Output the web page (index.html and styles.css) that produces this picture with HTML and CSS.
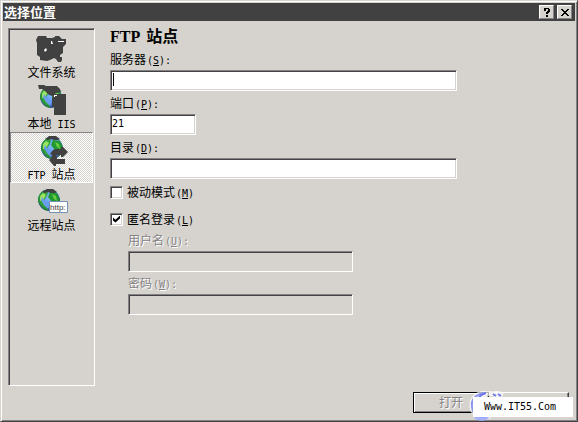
FILE: index.html
```html
<!DOCTYPE html>
<html lang="zh-CN">
<head>
<meta charset="utf-8">
<title>选择位置</title>
<link rel="stylesheet" href="styles.css">
</head>
<body>
<svg width="0" height="0" class="defs" aria-hidden="true">
  <defs>
    <radialGradient id="sea" cx="55%" cy="40%" r="60%">
      <stop offset="0" stop-color="#8cc3ff"/>
      <stop offset=".6" stop-color="#5a92ee"/>
      <stop offset="1" stop-color="#315aa5"/>
    </radialGradient>
    <radialGradient id="rim" cx="50%" cy="45%" r="55%">
      <stop offset=".7" stop-color="#103050" stop-opacity="0"/>
      <stop offset="1" stop-color="#103050" stop-opacity=".45"/>
    </radialGradient>
    <clipPath id="disc"><circle cx="11" cy="11" r="11"/></clipPath>
    <g id="globe" clip-path="url(#disc)">
      <circle cx="11" cy="11" r="11" fill="url(#sea)"/>
      <path d="M0 6 5 1l5 2-1 4-3 4 1 3 3 3v5l-4-1-6-8z" fill="#31a639"/>
      <path d="M2 7l3-3 3 2-3 5-3 1z" fill="#9ce363"/>
      <path d="M12 3l7 1 3 6-1 7-3 3-2-5-3-3-3-4z" fill="#219a31"/>
      <path d="M14 5l4 2 1 5-3-2z" fill="#6bcb42"/>
      <path d="M4 8l3 5 4 4-1 3-4-4-3-5z" fill="#6b9ef0"/>
      <circle cx="11" cy="11" r="11" fill="url(#rim)"/>
    </g>
  </defs>
</svg>
<div class="window">
  <header class="titlebar">
    <span class="title">选择位置</span>
    <button class="tool" type="button" aria-label="帮助"><svg width="8" height="9" viewBox="0 0 8 9" shape-rendering="crispEdges"><path d="M1 0h5v1h1v3H6v1H5v1H3V4h1V3h1V1H3v2H1zM3 7h2v2H3z"/></svg></button>
    <button class="tool" type="button" aria-label="关闭"><svg width="8" height="7" viewBox="0 0 8 7" shape-rendering="crispEdges"><path d="M0 0h2v1h1v1h2V1h1V0h2v1H7v1H6v1H5v1h1v1h1v1h1v1H6V6H5V5H3v1H2v1H0V6h1V5h1V4h1V3H2V2H1V1H0z"/></svg></button>
  </header>
  <div class="content">
    <nav class="places">
      <button class="place" type="button">
        <svg width="32" height="32" viewBox="0 0 32 32"><path d="M2 2h8l1 2h5l3-1V2h4l3 3h4v5l-3 3v6l-3 2v2h2v3l-1 2h-3l-2-3-2-1-4 2-3 1-7-1v-3l-3-2V9l-1-3z" fill="#424142"/><path d="M15 7h1l1 3h-2zM22 7h6v1h-6zM8 16l2-2 1 2-2 2z" fill="#fff"/></svg>
        <span>文件系统</span>
      </button>
      <button class="place" type="button">
        <svg width="32" height="32" viewBox="0 0 32 32"><use href="#globe" x="4" y="1"/><path d="M2 0h6l2 1h11l3 3 1 3-5 1-3 3-4-1-4-4-3-2H3zM18 9h12v21H18v-8h-2V13z" fill="#424142"/><path d="M18 10h3v1h-2v1h-1z" fill="#fff"/></svg>
        <span>本地<span class="latin"> IIS</span></span>
      </button>
      <button class="place selected" type="button" aria-pressed="true">
        <svg width="32" height="32" viewBox="0 0 32 32"><use href="#globe" x="5" y="1"/><path d="M9 3l4-3h7l4 3-2 1h-4l-3-1-3 1zM17 14l3-1h5v-2h2l5 5-5 5h-2v-2h-5l1 2v2h8v5h-9v2h-2l-5-6 3-3v-2l-2-1z" fill="#424142"/></svg>
        <span><span class="latin">FTP </span>站点</span>
      </button>
      <button class="place" type="button">
        <svg width="32" height="32" viewBox="0 0 32 32"><use href="#globe" x="2" y="2"/><path d="M6 5l5-3h6l4 3-2 1h-4l-3-1-3 1z" fill="#424142"/><path d="M13.500 14.500h18v11h-18z" fill="#fff" stroke="#7390b5"/><text class="http" x="14" y="23">http:</text></svg>
        <span>远程站点</span>
      </button>
    </nav>
    <main class="form">
      <h1><span>FTP</span> <span>站点</span></h1>
      <div class="field">
        <label for="server">服务器<span class="latin">(<u>S</u>):</span></label>
        <div class="entry"><input class="box" id="server" type="text" autofocus><i class="caret"></i></div>
      </div>
      <div class="field">
        <label for="port">端口<span class="latin">(<u>P</u>):</span></label>
        <input class="box short" id="port" type="text" value="21">
      </div>
      <div class="field">
        <label for="folder">目录<span class="latin">(<u>D</u>):</span></label>
        <input class="box" id="folder" type="text">
      </div>
      <div class="check"><input id="passive" type="checkbox"><label for="passive">被动模式<span class="latin">(<u>M</u>)</span></label></div>
      <div class="check"><input id="anon" type="checkbox" checked><label for="anon">匿名登录<span class="latin">(<u>L</u>)</span></label></div>
      <div class="login">
        <div class="field">
          <label for="user">用户名<span class="latin">(<u>U</u>):</span></label>
          <input class="box" id="user" type="text" disabled>
        </div>
        <div class="field">
          <label for="pass">密码<span class="latin">(<u>W</u>):</span></label>
          <input class="box" id="pass" type="password" disabled>
        </div>
      </div>
    </main>
  </div>
  <footer class="actions">
    <button class="action default" type="button" disabled>打开</button>
    <button class="action" type="button" aria-label="取消"></button>
  </footer>
  <svg class="swirl" width="38" height="30" viewBox="0 0 38 30" fill="none"><path d="M18 2C7 2 2 8 3 16c1 7 7 12 18 9M34 4l-9-3M12 7c5-6 12-5 18-2" stroke="#fff" stroke-width="5" opacity=".7"/><path d="M16 2C6 3 2 9 3 16c1 9 9 13 17 9" stroke="#8c96ef" stroke-width="2"/><path d="M9 9c1-4 4-6 8-7M24 3l3 2M29 3l3 2" stroke="#6b79e7" stroke-width="2"/><path d="M6 26c4 3 10 3 13 0" stroke="#a5b2ff" stroke-width="3"/></svg>
  <div class="stamp">Www.IT55.Com</div>
</div>
</body>
</html>
```
FILE: styles.css
```css
:root {
  --face: #d6d3ce;
  --dark: #424142;
  --shade: #848284;
}

* {
  box-sizing: border-box;
}

body {
  margin: 0;
  font: 12px/14px "Noto Sans CJK SC", sans-serif;
  color: #000;
}

button,
input {
  font: inherit;
  color: inherit;
  margin: 0;
  padding: 0;
  border-radius: 0;
  outline: 0;
}

.defs {
  position: absolute;
}

.latin,
.stamp,
#port {
  font-family: "DejaVu Sans Mono", monospace;
  font-size: 10px;
}

.latin {
  line-height: 1;
  white-space: pre;
}

.window {
  position: relative;
  display: flex;
  flex-direction: column;
  min-height: 100vh;
  padding: 1px;
  background: var(--face);
  border: 1px solid;
  border-color: var(--face) var(--dark) var(--dark) var(--face);
  box-shadow: inset 1px 1px #fff, inset -1px -1px var(--shade);
}

.titlebar {
  display: flex;
  align-items: center;
  gap: 3px;
  height: 18px;
  margin: 1px;
  padding: 0 3px 0 1px;
  background: var(--dark);
  color: #fff;
  font-weight: bold;
}

.title {
  flex: 1;
  font-size: 13px;
  line-height: 14px;
}

.tool {
  display: grid;
  place-items: center;
  width: 15px;
  height: 14px;
  background: var(--face);
  border: 1px solid;
  border-color: #fff var(--shade) var(--shade) #fff;
}

.content {
  flex: 1;
  display: flex;
  gap: 15px;
  padding: 6px;
}

.places {
  width: 87px;
  border: 1px solid;
  border-color: var(--shade) #fff #fff var(--shade);
  box-shadow: inset 1px 1px var(--dark);
  padding: 1px;
}

.place {
  display: flex;
  flex-direction: column;
  align-items: center;
  justify-content: flex-start;
  width: 100%;
  height: 51px;
  padding-top: 3px;
  background: none;
  border: 1px solid transparent;
}

.place > svg {
  flex: none;
}

.place > span {
  height: 12px;
  line-height: 12px;
}

.selected {
  border-color: var(--shade) #fff #fff var(--shade);
  background: repeating-conic-gradient(#fff 0 25%, var(--face) 0 50%) 0 0 / 2px 2px;
}

.http {
  font: 8px "Liberation Sans", sans-serif;
  fill: #424142;
}

.form {
  flex: 1;
}

h1 {
  display: flex;
  gap: 6px;
  margin: 0 0 6px;
  font: bold 16px/18px "Liberation Serif", "Noto Sans CJK SC", serif;
}

.field {
  display: flex;
  flex-direction: column;
  gap: 4px;
  margin-bottom: 5px;
}

label {
  height: 14px;
}

.field .latin,
.check .latin {
  margin-left: 1px;
}

.entry {
  position: relative;
  display: flex;
  max-width: 347px;
}

.caret {
  position: absolute;
  left: 3px;
  top: 3px;
  width: 1px;
  height: 13px;
  background: #000;
}

.box {
  width: 100%;
  max-width: 347px;
  height: 21px;
  padding: 0 1px 2px;
  background: #fff;
  border: 1px solid;
  border-color: var(--shade) #fff #fff var(--shade);
  box-shadow: inset 1px 1px var(--dark), inset -1px -1px var(--face);
  caret-color: transparent;
}

.short {
  max-width: 86px;
}

.check {
  display: flex;
  align-items: center;
  gap: 4px;
  height: 16px;
  margin-bottom: 11px;
}

.check input {
  appearance: none;
  width: 13px;
  height: 13px;
  background: #fff;
  border: 1px solid;
  border-color: var(--shade) #fff #fff var(--shade);
  box-shadow: inset 1px 1px var(--dark), inset -1px -1px var(--face);
}

.check input:checked::before {
  content: "";
  display: block;
  width: 7px;
  height: 7px;
  margin: 2px;
  background: #000;
  clip-path: polygon(0 28%, 35% 60%, 100% 0, 100% 42%, 35% 100%, 0 70%);
}

.login {
  margin: -5px 0 0 18px;
  color: var(--shade);
  text-shadow: 1px 1px #fff;
}

.login .field {
  margin-bottom: 4px;
}

.login .box {
  max-width: 225px;
  background: var(--face);
}

.actions {
  display: flex;
  justify-content: flex-end;
  gap: 5px;
  padding: 0 7px 7px;
}

.action {
  width: 75px;
  height: 21px;
  padding-bottom: 2px;
  background: var(--face);
  border: 1px solid;
  border-color: #fff var(--dark) var(--dark) #fff;
  box-shadow: inset -1px -1px var(--shade);
}

.default {
  width: 76px;
  border-color: #000;
  box-shadow: inset 1px 1px #fff, inset -1px -1px var(--shade);
  color: var(--shade);
  text-shadow: 1px 1px #fff;
}

.swirl {
  position: absolute;
  right: 70px;
  bottom: 0;
}

.stamp {
  position: absolute;
  right: 4px;
  bottom: 4px;
  width: 100px;
  background: #fff;
  line-height: 20px;
  text-align: center;
  padding-right: 6px;
}
```
